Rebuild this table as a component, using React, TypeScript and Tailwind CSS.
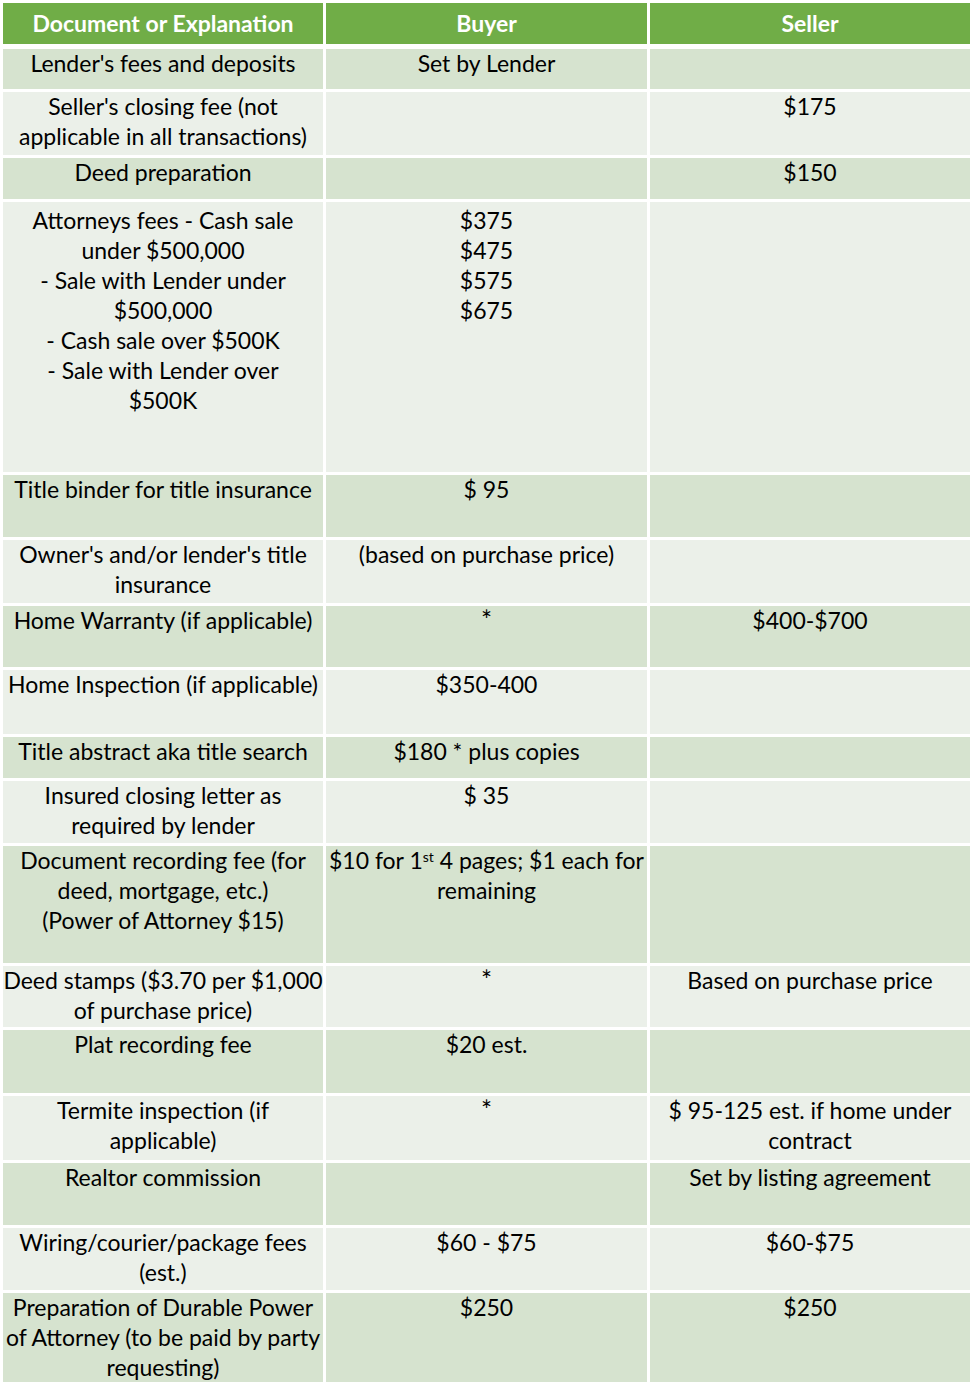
import React from "react";

type Row = {
  h: string;
  tone: "dark" | "light";
  doc: React.ReactNode;
  buyer?: React.ReactNode;
  seller?: React.ReactNode;
  pad?: string;
};

const star = <span className="text-[26px]">*</span>;

const rows: Row[] = [
  { h: "h-[40px]", tone: "dark", doc: "Lender's fees and deposits", buyer: "Set by Lender" },
  {
    h: "h-[63px]",
    tone: "light",
    doc: (
      <>
        Seller's closing fee (not
        <br />
        applicable in all transactions)
      </>
    ),
    seller: "$175",
  },
  { h: "h-[41px]", tone: "dark", doc: "Deed preparation", seller: "$150" },
  {
    h: "h-[270px]",
    tone: "light",
    pad: "mt-[3px]",
    doc: (
      <>
        Attorneys fees - Cash sale
        <br />
        under $500,000
        <br />
        - Sale with Lender under
        <br />
        $500,000
        <br />
        - Cash sale over $500K
        <br />
        - Sale with Lender over
        <br />
        $500K
      </>
    ),
    buyer: (
      <>
        $375
        <br />
        $475
        <br />
        $575
        <br />
        $675
      </>
    ),
  },
  { h: "h-[62px]", tone: "dark", doc: "Title binder for title insurance", buyer: "$ 95" },
  {
    h: "h-[63px]",
    tone: "light",
    doc: (
      <>
        Owner's and/or lender's title
        <br />
        insurance
      </>
    ),
    buyer: "(based on purchase price)",
  },
  { h: "h-[61px]", tone: "dark", doc: "Home Warranty (if applicable)", buyer: star, seller: "$400-$700" },
  { h: "h-[64px]", tone: "light", doc: "Home Inspection (if applicable)", buyer: "$350-400" },
  { h: "h-[41px]", tone: "dark", doc: "Title abstract aka title search", buyer: "$180 * plus copies" },
  {
    h: "h-[62px]",
    tone: "light",
    doc: (
      <>
        Insured closing letter as
        <br />
        required by lender
      </>
    ),
    buyer: "$ 35",
  },
  {
    h: "h-[117px]",
    tone: "dark",
    doc: (
      <>
        Document recording fee (for
        <br />
        deed, mortgage, etc.)
        <br />
        (Power of Attorney $15)
      </>
    ),
    buyer: (
      <>
        $10 for 1<sup className="text-[14px]">st</sup> 4 pages; $1 each for
        <br />
        remaining
      </>
    ),
  },
  {
    h: "h-[61px]",
    tone: "light",
    doc: (
      <>
        Deed stamps ($3.70 per $1,000
        <br />
        of purchase price)
      </>
    ),
    buyer: star,
    seller: "Based on purchase price",
  },
  { h: "h-[63px]", tone: "dark", doc: "Plat recording fee", buyer: "$20 est." },
  {
    h: "h-[64px]",
    tone: "light",
    doc: (
      <>
        Termite inspection (if
        <br />
        applicable)
      </>
    ),
    buyer: star,
    seller: (
      <>
        $ 95-125 est. if home under
        <br />
        contract
      </>
    ),
  },
  { h: "h-[62px]", tone: "dark", doc: "Realtor commission", seller: "Set by listing agreement" },
  {
    h: "h-[62px]",
    tone: "light",
    doc: (
      <>
        Wiring/courier/package fees
        <br />
        (est.)
      </>
    ),
    buyer: "$60 - $75",
    seller: "$60-$75",
  },
  {
    h: "h-[89px]",
    tone: "dark",
    doc: (
      <>
        Preparation of Durable Power
        <br />
        of Attorney (to be paid by party
        <br />
        requesting)
      </>
    ),
    buyer: "$250",
    seller: "$250",
  },
];

function Cell({ bg, pad, children }: { bg: string; pad?: string; children?: React.ReactNode }) {
  return (
    <div className={`${bg} overflow-visible whitespace-nowrap text-center`}>
      <div className={pad ?? "-mt-[1px]"}>{children}</div>
    </div>
  );
}

export default function App() {
  return (
    <div className="min-h-[1398px] bg-white pl-[3px] pt-[3px] font-['Lato','Open_Sans',sans-serif] text-[23px] leading-[30px] text-black">
      <div className="grid h-[41px] w-[967px] grid-cols-[320px_321px_320px] gap-x-[3px]">
        {["Document or Explanation", "Buyer", "Seller"].map((t) => (
          <div key={t} className="flex items-center justify-center bg-[#70ad47] pb-[2px] font-bold text-white">
            {t}
          </div>
        ))}
      </div>
      <div className="mt-[5px] flex w-[967px] flex-col gap-y-[3px]">
        {rows.map((r, i) => {
          const bg = r.tone === "dark" ? "bg-[#d6e3cf]" : "bg-[#ebf0e9]";
          return (
            <div key={i} className={`grid ${r.h} grid-cols-[320px_321px_320px] gap-x-[3px]`}>
              <Cell bg={bg} pad={r.pad}>{r.doc}</Cell>
              <Cell bg={bg} pad={r.pad}>{r.buyer}</Cell>
              <Cell bg={bg} pad={r.pad}>{r.seller}</Cell>
            </div>
          );
        })}
      </div>
    </div>
  );
}
